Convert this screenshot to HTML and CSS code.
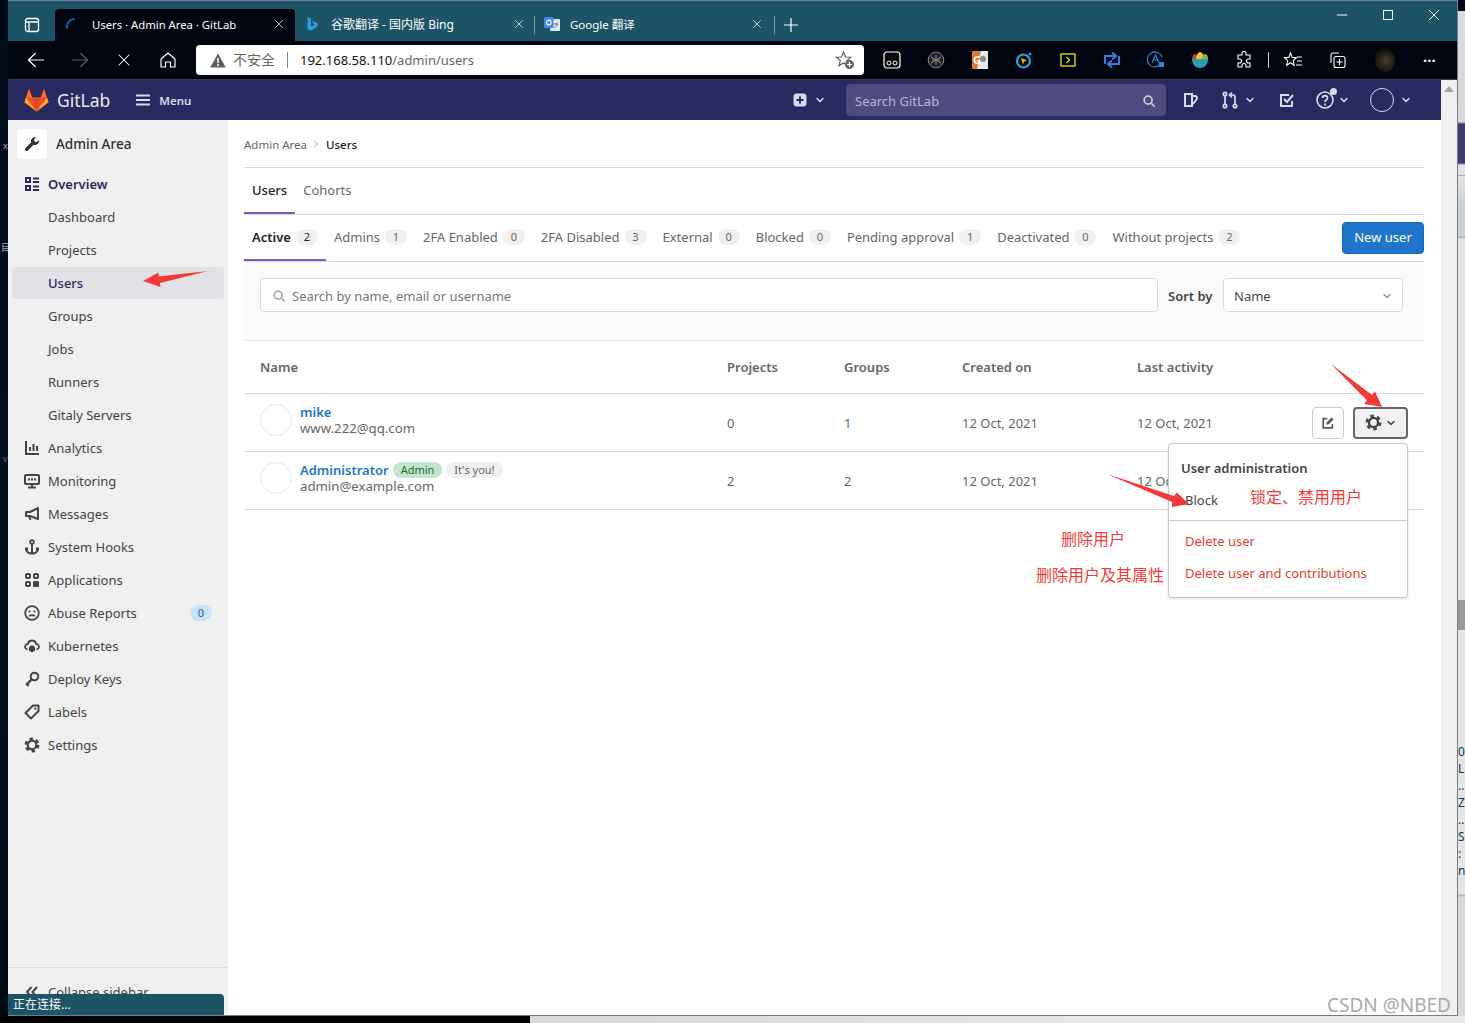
FILE: index.html
```html
<!DOCTYPE html>
<html lang="en">
<head>
  <meta charset="UTF-8" />
  <title>Users · Admin Area · GitLab</title>
  <link rel="stylesheet" href="styles.css">
</head>

<body>

<svg class="sprites" width="0" height="0">
  <symbol id="i-chevron" viewBox="0 0 16 16"><path d="M4 6l4 4 4-4" fill="none" stroke="currentColor" stroke-width="2" stroke-linecap="round" stroke-linejoin="round"/></symbol>
  <symbol id="i-search" viewBox="0 0 16 16"><circle cx="7" cy="7" r="4.5" fill="none" stroke="currentColor" stroke-width="2"/><path d="M10.5 10.5L14 14" stroke="currentColor" stroke-width="2" stroke-linecap="round"/></symbol>
  <symbol id="i-gear" viewBox="0 0 16 16"><circle cx="8" cy="8" r="4.3" fill="none" stroke="currentColor" stroke-width="2.2"/><circle cx="8" cy="8" r="6.3" fill="none" stroke="currentColor" stroke-width="2.4" stroke-dasharray="3.4 3.2"/></symbol>
  <symbol id="i-overview" viewBox="0 0 16 16"><g fill="none" stroke="currentColor" stroke-width="2"><rect x="2" y="2" width="4" height="4"/><rect x="2" y="10" width="4" height="4"/><path d="M9 2.5h6M9 6h6M9 10.500h6M9 14h6"/></g></symbol>
  <symbol id="i-analytics" viewBox="0 0 16 16"><path d="M2 1v13h13M6 11V7M9.500 11V4M13 11V6" fill="none" stroke="currentColor" stroke-width="2"/></symbol>
  <symbol id="i-monitor" viewBox="0 0 16 16"><rect x="1" y="2" width="14" height="9" rx="1" fill="none" stroke="currentColor" stroke-width="2"/><path d="M4 14.500h8M8 11v3M4 6.500h2M7 6.500h2M10 6.500h2" stroke="currentColor" stroke-width="1.800"/></symbol>
  <symbol id="i-messages" viewBox="0 0 16 16"><path d="M14 2v11L6 10H2V6h4zM5 10l1.500 4" fill="none" stroke="currentColor" stroke-width="2" stroke-linejoin="round"/></symbol>
  <symbol id="i-hook" viewBox="0 0 16 16"><circle cx="8" cy="3" r="1.800" fill="none" stroke="currentColor" stroke-width="1.800"/><path d="M8 5v9M2 9v1a6 4.500 0 0 0 12 0V9" fill="none" stroke="currentColor" stroke-width="2"/><path d="M1 10h3M12 10h3" stroke="currentColor" stroke-width="3"/></symbol>
  <symbol id="i-apps" viewBox="0 0 16 16"><g fill="none" stroke="currentColor" stroke-width="2"><rect x="2" y="2" width="4" height="4" rx="1"/><rect x="10" y="2" width="4" height="4" rx="1"/><rect x="2" y="10" width="4" height="4" rx="1"/></g><rect x="9" y="9" width="6" height="6" rx="1.500" fill="currentColor"/></symbol>
  <symbol id="i-abuse" viewBox="0 0 16 16"><circle cx="8" cy="8" r="6.800" fill="none" stroke="currentColor" stroke-width="1.800"/><circle cx="5.500" cy="6.500" r="1.100" fill="currentColor"/><circle cx="10.500" cy="6.500" r="1.100" fill="currentColor"/><path d="M5.200 11.300c1.500-1.600 4.100-1.600 5.600 0" fill="none" stroke="currentColor" stroke-width="1.600"/></symbol>
  <symbol id="i-kube" viewBox="0 0 16 16"><path d="M3.500 11.500C1.500 11 .8 9.500 1.200 8c.4-1.300 1.500-2 2.600-2C4.500 3.800 6 2.500 8 2.500S11.500 3.800 12.200 6c1.100 0 2.200.7 2.600 2 .4 1.500-.3 3-2.300 3.500" fill="none" stroke="currentColor" stroke-width="1.800"/><path d="M8 7l3 2v3.500L8 14.500l-3-2V9z" fill="currentColor"/></symbol>
  <symbol id="i-key" viewBox="0 0 16 16"><circle cx="10.500" cy="5.500" r="3.800" fill="none" stroke="currentColor" stroke-width="2"/><path d="M7.700 8.300L2 14M3 13l1.800 1.800" fill="none" stroke="currentColor" stroke-width="2.400"/></symbol>
  <symbol id="i-label" viewBox="0 0 16 16"><path d="M9 1.500h5.500V7l-7.500 7.500L1.500 9z" fill="none" stroke="currentColor" stroke-width="2" stroke-linejoin="round"/><circle cx="11.300" cy="4.700" r="1.100" fill="currentColor"/></symbol>
  <symbol id="i-wrench" viewBox="0 0 16 16"><path d="M15 4.300l-2.800 2.200-2.600-2.200L12 1.400C9.800.5 7.300 2 7 4.400c-.1.800 0 1.400.2 2L1.500 12c-.8.800-.8 1.800-.1 2.500.7.700 1.700.7 2.500-.1l5.700-5.700c.6.200 1.300.300 2 .2 2.400-.4 4.200-2.300 3.400-4.600z" fill="currentColor"/></symbol>
  <symbol id="i-edit" viewBox="0 0 16 16"><path d="M7 3H2.500v10.500H13V9" fill="none" stroke="currentColor" stroke-width="1.900"/><path d="M6.500 7.300L12 1.800l2.200 2.200-5.500 5.500-2.700.5z" fill="currentColor"/></symbol>
  <symbol id="i-x" viewBox="0 0 16 16"><path d="M2 2l12 12M14 2L2 14" stroke="currentColor" stroke-width="1.200" fill="none"/></symbol>
</svg>

<div class="screen">
  <div class="strip-left">
    <span class="bit bit-x">x</span>
    <span class="bit bit-m">目</span>
    <span class="bit bit-v">v</span>
  </div>

  <div class="window">
    <div class="tabstrip">
      <svg class="tab-toggle" width="16" height="16" viewBox="0 0 16 16"><rect x="1.500" y="1.500" width="13" height="13" rx="2" fill="none" stroke="#fff" stroke-width="1.300"/><path d="M1.500 5h13M5 5v9" stroke="#fff" stroke-width="1.300"/></svg>
      <div class="tab tab-active">
        <svg class="favicon" width="16" height="16" viewBox="0 0 16 16"><path d="M3 12.500A8 8 0 0 1 11 3" fill="none" stroke="#0a5fa6" stroke-width="2"/></svg>
        <span class="tab-title">Users · Admin Area · GitLab</span>
        <svg class="tab-close" width="10" height="10"><use href="#i-x"/></svg>
      </div>
      <div class="tab">
        <svg class="favicon" width="16" height="16" viewBox="0 0 16 16"><path d="M3.500 1l3.500 1.200v8.600l4-2.200-2-1-1-2.700 5.500 2v3.300L7 14.800l-3.500-2z" fill="#2a9fe8"/></svg>
        <span class="tab-title">谷歌翻译 - 国内版 Bing</span>
        <svg class="tab-close" width="10" height="10"><use href="#i-x"/></svg>
      </div>
      <div class="tab-divider"></div>
      <div class="tab tab-last">
        <svg class="favicon" width="16" height="16" viewBox="0 0 16 16"><rect x="6" y="3" width="10" height="12" rx="1" fill="#dfe6f1"/><rect x="0" y="1" width="9.500" height="11" rx="1" fill="#4285f4"/><circle cx="4.800" cy="6.500" r="2.300" fill="none" stroke="#fff" stroke-width="1.200"/><path d="M10 8h4M12 7v1M13.500 8c-.5 2-2 3-3.500 3.500" fill="none" stroke="#666" stroke-width=".900"/></svg>
        <span class="tab-title">Google 翻译</span>
        <svg class="tab-close" width="10" height="10"><use href="#i-x"/></svg>
      </div>
      <div class="tab-divider"></div>
      <svg class="tab-new" width="14" height="14" viewBox="0 0 14 14"><path d="M7 0v14M0 7h14" stroke="#fff" stroke-width="1.200"/></svg>
      <div class="win-controls">
        <svg width="10" height="10" viewBox="0 0 10 10"><path d="M0 5h10" stroke="#fff"/></svg>
        <svg width="10" height="10" viewBox="0 0 10 10"><rect x=".5" y=".5" width="9" height="9" fill="none" stroke="#fff"/></svg>
        <svg width="10" height="10" viewBox="0 0 10 10"><path d="M0 0l10 10M10 0L0 10" stroke="#fff"/></svg>
      </div>
    </div>

    <div class="toolbar">
      <div class="tool-nav">
        <svg width="18" height="18" viewBox="0 0 18 18"><path d="M17 9H1.500M8.500 2L1.500 9l7 7" fill="none" stroke="#fff" stroke-width="1.200"/></svg>
        <svg width="18" height="18" viewBox="0 0 18 18"><path d="M1 9h15.500M9.500 2l7 7-7 7" fill="none" stroke="#5b5b60" stroke-width="1.200"/></svg>
        <svg class="tool-stop" width="14" height="14" viewBox="0 0 16 16"><use href="#i-x" color="#fff"/></svg>
        <svg width="18" height="18" viewBox="0 0 18 18"><path d="M2 8l7-6 7 6v8h-4.500v-5h-5v5H2z" fill="none" stroke="#fff" stroke-width="1.200" stroke-linejoin="round"/></svg>
      </div>
      <div class="address">
        <svg width="16" height="15" viewBox="0 0 16 15"><path d="M8 .5L15.800 14.500H.2z" fill="#606060"/><path d="M8 5v5M8 11v2" stroke="#fff" stroke-width="1.500"/></svg>
        <span class="addr-warn">不安全</span>
        <span class="addr-sep"></span>
        <span class="addr-url">192.168.58.110<span class="addr-path">/admin/users</span></span>
        <svg class="addr-star" width="20" height="20" viewBox="0 0 20 20"><path d="M8.500 2l2 5 5.300.300-4 3.400 1.300 5.100-4.600-2.800-4.500 2.800 1.300-5.100-4-3.400 5.300-.3z" fill="none" stroke="#555" stroke-width="1.100"/><circle cx="14.500" cy="14.500" r="4.500" fill="#666"/><path d="M14.500 12v5M12 14.500h5" stroke="#fff" stroke-width="1.200"/></svg>
      </div>
      <div class="extensions">
        <svg width="18" height="18" viewBox="0 0 18 18"><rect x="1" y="1" width="16" height="16" rx="3" fill="#0a0a0a" stroke="#fff" stroke-width="1.200"/><circle cx="6" cy="12" r="2" fill="none" stroke="#fff"/><circle cx="12" cy="12" r="2" fill="none" stroke="#fff"/></svg>
        <svg width="18" height="18" viewBox="0 0 18 18"><circle cx="9" cy="9" r="7.800" fill="#222" stroke="#888"/><path d="M9 4v10M4 6l10 6M14 6L4 12M5 9h8" stroke="#888"/></svg>
        <svg class="ext-narrow" width="16" height="18" viewBox="0 0 16 18"><rect width="16" height="18" fill="#e9e9e9"/><path d="M0 0h9l-4 18H0z" fill="#e8772e"/><text x="1" y="13" class="ext-g">G</text><circle cx="11" cy="8" r="3" fill="#7c8b96"/></svg>
        <svg width="18" height="18" viewBox="0 0 18 18"><circle cx="8.500" cy="10" r="6.500" fill="#0a0a0a" stroke="#2e9fe0" stroke-width="2.200"/><path d="M6 7l6 2.500-3 1-1 3z" fill="#f2c200"/><circle cx="15" cy="3" r="1.500" fill="#2e9fe0"/></svg>
        <svg class="ext-narrow" width="16" height="16" viewBox="0 0 16 16"><rect x="1" y="2" width="14" height="12" fill="none" stroke="#e2d21a" stroke-width="1.400"/><path d="M6.500 5l3 3-3 3" fill="none" stroke="#e2d21a" stroke-width="1.400"/></svg>
        <svg width="18" height="18" viewBox="0 0 18 18"><path d="M2 13V5h10M9 1.500L13 5 9 8.500M16 5v8H6M9 9.500L5 13l4 3.500" fill="none" stroke="#2e7fe8" stroke-width="2"/></svg>
        <svg width="18" height="18" viewBox="0 0 18 18"><path d="M13 14A7.500 7.500 0 1 1 15 6" fill="none" stroke="#1f8fe0" stroke-width="1.200"/><path d="M5 12l3.500-8L12 12M6.500 9h4" fill="none" stroke="#1f8fe0" stroke-width="1.200"/><rect x="12" y="11" width="5" height="5" fill="#1f8fe0"/></svg>
        <svg width="18" height="18" viewBox="0 0 18 18"><path d="M1 8h16c0 5-3 9-8 9s-8-4-8-9z" fill="#2b9db3"/><path d="M1 8c0-3 2-5 3-5s2 2 3 5z" fill="#c8413c"/><path d="M5 8c0-4 2-7 4-7s4 3 4 7z" fill="#f1c232"/><path d="M11 8c0-3 1-5 3-5s3 2 3 5z" fill="#7fb84a"/></svg>
        <svg width="18" height="18" viewBox="0 0 18 18"><path d="M7 2.500a2 2 0 0 1 4 0V4h4v4h-1.500a2 2 0 0 0 0 4H15v4h-4v-1.500a2 2 0 0 0-4 0V16H3v-4h1.500a2 2 0 0 0 0-4H3V4h4z" fill="none" stroke="#fff" stroke-width="1.100"/></svg>
        <span class="tool-sep"></span>
        <svg width="20" height="18" viewBox="0 0 20 18"><path d="M7.500 2l1.700 4.400 4.300.3-3.300 2.900 1 4.600-3.700-2.500-3.800 2.500 1-4.600L1.500 6.700l4.400-.3zM14 6h5M14 10h5M13 14h6" fill="none" stroke="#fff" stroke-width="1.100"/></svg>
        <svg class="ext-col" width="18" height="18" viewBox="0 0 18 18"><path d="M3 12V4a2 2 0 0 1 2-2h6" fill="none" stroke="#fff" stroke-width="1.100"/><rect x="6" y="5.500" width="11" height="11" rx="2" fill="none" stroke="#fff" stroke-width="1.100"/><path d="M11.500 8v6M8.500 11h6" stroke="#fff" stroke-width="1.100"/></svg>
        <span class="profile"></span>
        <span class="more">···</span>
      </div>
    </div>

    <div class="site">
      <div class="site-main">
        <header class="gl-nav">
          <svg class="gl-logo" width="25" height="24" viewBox="0 0 25 24">
            <path d="M12.500 23.500L.5 14.300 2 9.500l3-9 3.300 9h8.400l3.300-9 3 9 1.500 4.800z" fill="#fc6d26"/>
            <path d="M12.500 23.500L8.300 9.500h8.400z" fill="#e24329"/>
            <path d="M12.500 23.500L2 9.500h6.300zM12.500 23.500L23 9.500h-6.300z" fill="#e8532a"/>
            <path d="M2 9.500L.5 14.300l12 9.200zM23 9.500l1.500 4.800-12 9.200z" fill="#fca326"/>
          </svg>
          <span class="gl-name">GitLab</span>
          <svg class="gl-burger" width="14" height="12" viewBox="0 0 14 12"><path d="M0 1.500h14M0 6h14M0 10.500h14" stroke="#dadaf0" stroke-width="1.800"/></svg>
          <span class="gl-menu">Menu</span>
          <div class="gl-nav-right">
            <svg width="14" height="14" viewBox="0 0 14 14"><rect width="13" height="13" x=".5" y=".5" rx="3" fill="#dadaf0"/><path d="M7 3.500v7M3.500 7h7" stroke="#292961" stroke-width="2"/></svg>
            <svg class="gl-chev" width="12" height="12"><use href="#i-chevron"/></svg>
            <div class="gl-search">
              <span>Search GitLab</span>
              <svg width="14" height="14"><use href="#i-search"/></svg>
            </div>
            <svg class="gl-issues" width="16" height="16" viewBox="0 0 16 16"><path d="M2 2h7v12H2zM10 4h2c2 0 2.500 2 1.500 3.500L10 12" fill="none" stroke="#dadaf0" stroke-width="2"/></svg>
            <svg class="gl-mr" width="16" height="18" viewBox="0 0 16 18"><g fill="none" stroke="#dadaf0" stroke-width="1.700"><circle cx="3" cy="3" r="1.700"/><circle cx="3" cy="15" r="1.700"/><circle cx="13" cy="15" r="1.700"/><path d="M3 5v8M13 13V6c0-1.500-1-2-2-2H8M10 1.500L7.500 4 10 6.500"/></g></svg>
            <svg class="gl-chev" width="12" height="12"><use href="#i-chevron"/></svg>
            <svg class="gl-todo" width="16" height="16" viewBox="0 0 16 16"><path d="M13 9v5H2V3h8M5 7l3 3 6-7" fill="none" stroke="#dadaf0" stroke-width="2"/></svg>
            <span class="gl-help">
              <svg width="18" height="18" viewBox="0 0 18 18"><circle cx="9" cy="9" r="8" fill="none" stroke="#dadaf0" stroke-width="1.600"/><path d="M6.500 7c0-3.300 5-3.300 5 0 0 2-2.500 2-2.500 4M9 12.500v2" fill="none" stroke="#dadaf0" stroke-width="1.700"/></svg>
              <span class="gl-help-dot"></span>
            </span>
            <svg class="gl-chev" width="12" height="12"><use href="#i-chevron"/></svg>
            <span class="gl-avatar"></span>
            <svg class="gl-chev" width="12" height="12"><use href="#i-chevron"/></svg>
          </div>
        </header>

        <div class="page">
          <aside class="sidebar">
            <div class="context">
              <span class="context-icon"><svg width="16" height="16"><use href="#i-wrench"/></svg></span>
              <span>Admin Area</span>
            </div>
            <ul class="side-list">
              <li class="item item-head"><svg width="16" height="16"><use href="#i-overview"/></svg>Overview</li>
              <li class="item sub">Dashboard</li>
              <li class="item sub">Projects</li>
              <li class="item sub active">Users</li>
              <li class="item sub">Groups</li>
              <li class="item sub">Jobs</li>
              <li class="item sub">Runners</li>
              <li class="item sub">Gitaly Servers</li>
              <li class="item"><svg width="16" height="16"><use href="#i-analytics"/></svg>Analytics</li>
              <li class="item"><svg width="16" height="16"><use href="#i-monitor"/></svg>Monitoring</li>
              <li class="item"><svg width="16" height="16"><use href="#i-messages"/></svg>Messages</li>
              <li class="item"><svg width="16" height="16"><use href="#i-hook"/></svg>System Hooks</li>
              <li class="item"><svg width="16" height="16"><use href="#i-apps"/></svg>Applications</li>
              <li class="item"><svg width="16" height="16"><use href="#i-abuse"/></svg>Abuse Reports<span class="side-badge">0</span></li>
              <li class="item"><svg width="16" height="16"><use href="#i-kube"/></svg>Kubernetes</li>
              <li class="item"><svg width="16" height="16"><use href="#i-key"/></svg>Deploy Keys</li>
              <li class="item"><svg width="16" height="16"><use href="#i-label"/></svg>Labels</li>
              <li class="item"><svg width="16" height="16"><use href="#i-gear"/></svg>Settings</li>
            </ul>
            <div class="collapse">
              <svg width="16" height="16" viewBox="0 0 16 16"><path d="M7.500 3L3 8l4.500 5M13 3L8.500 8l4.500 5" fill="none" stroke="currentColor" stroke-width="2"/></svg>
              Collapse sidebar
            </div>
          </aside>

          <main class="content">
            <div class="crumbs">
              <span>Admin Area</span>
              <svg width="8" height="8" viewBox="0 0 16 16"><path d="M5 2l6 6-6 6" fill="none" stroke="#aaa" stroke-width="2"/></svg>
              <span class="crumb-now">Users</span>
            </div>

            <nav class="tabs-top">
              <a class="top-tab on">Users</a>
              <a class="top-tab">Cohorts</a>
            </nav>

            <div class="tabs-filter">
              <a class="f-tab on">Active<b>2</b></a>
              <a class="f-tab">Admins<b>1</b></a>
              <a class="f-tab">2FA Enabled<b>0</b></a>
              <a class="f-tab">2FA Disabled<b>3</b></a>
              <a class="f-tab">External<b>0</b></a>
              <a class="f-tab">Blocked<b>0</b></a>
              <a class="f-tab">Pending approval<b>1</b></a>
              <a class="f-tab">Deactivated<b>0</b></a>
              <a class="f-tab">Without projects<b>2</b></a>
              <button class="btn-new">New user</button>
            </div>

            <div class="filter-bar">
              <div class="filter-input">
                <svg width="14" height="14"><use href="#i-search"/></svg>
                Search by name, email or username
              </div>
              <span class="sort-label">Sort by</span>
              <div class="sort-select">Name<svg width="12" height="12"><use href="#i-chevron"/></svg></div>
            </div>

            <div class="row row-head">
              <span>Name</span><span>Projects</span><span>Groups</span><span>Created on</span><span>Last activity</span>
            </div>

            <div class="row">
              <div class="user">
                <span class="avatar"></span>
                <div class="user-text">
                  <div><a class="user-name">mike</a></div>
                  <div class="user-mail">www.222@qq.com</div>
                </div>
              </div>
              <span>0</span><span>1</span><span>12 Oct, 2021</span><span>12 Oct, 2021</span>
              <div class="row-actions">
                <button class="btn-edit"><svg width="14" height="14"><use href="#i-edit"/></svg></button>
                <button class="btn-gear"><svg width="17" height="17"><use href="#i-gear"/></svg><svg width="12" height="12"><use href="#i-chevron"/></svg></button>
              </div>
            </div>

            <div class="row">
              <div class="user">
                <span class="avatar"></span>
                <div class="user-text">
                  <div><a class="user-name">Administrator</a><span class="pill pill-green">Admin</span><span class="pill">It's you!</span></div>
                  <div class="user-mail">admin@example.com</div>
                </div>
              </div>
              <span>2</span><span>2</span><span>12 Oct, 2021</span><span>12 Oct, 2021</span>
            </div>

            <div class="menu">
              <div class="menu-title">User administration</div>
              <div class="menu-item">Block</div>
              <div class="menu-line"></div>
              <div class="menu-item danger">Delete user</div>
              <div class="menu-item danger">Delete user and contributions</div>
            </div>
          </main>

          <div class="status">正在连接...</div>
        </div>
      </div>

      <div class="scrollbar"><svg width="10" height="6" viewBox="0 0 10 6"><path d="M5 0l5 6H0z" fill="#a3a3a3"/></svg></div>
    </div>
  </div>

  <div class="strip-right">
    <span>0.</span><span>L.</span><span>..</span><span>Z</span><span>..</span><span>S</span><span>:</span><span>n</span>
  </div>
  <div class="strip-bottom"></div>
</div>

<svg class="arrows" width="1465" height="1023">
  <polygon points="143,281 158.500,272.500 158.500,276.500 208,271 160,283 160.500,287" />
  <polygon points="1331,364 1372,395 1375,391.500 1382,407 1364,404 1367,400.500" />
  <polygon points="1107,474 1174,496 1177,492.500 1189,504 1172,507 1172,502" />
</svg>
<div class="note note-block">锁定、禁用用户</div>
<div class="note note-del">删除用户</div>
<div class="note note-delall">删除用户及其属性</div>
<div class="watermark">CSDN @NBED</div>

</body>
</html>
```

FILE: styles.css
```css
:root {
  --chrome-teal: #1c5367;
  --chrome-black: #01050f;
  --nav-bg: #292961;
  --nav-fg: #dadaf0;
  --side-bg: #f0f0f0;
  --line: #dbdbdb;
  --text: #303030;
  --muted: #5e5e5e;
  --blue: #1f75cb;
  --mark: #f33a3a;
}

* {
  box-sizing: border-box;
  margin: 0;
  padding: 0;
}

html, body {
  height: 100%;
  overflow: hidden;
  font-family: "Noto Sans", "Noto Sans CJK SC", sans-serif;
  font-size: 13px;
  color: var(--text);
  background: #000;
}

.sprites {
  position: absolute;
}

.screen {
  display: grid;
  grid-template-columns: 8px 1450px 7px;
  grid-template-rows: 1016px 7px;
  height: 1023px;
}

.strip-left {
  display: flex;
  flex-direction: column;
  overflow: hidden;
  background: linear-gradient(180deg, #010a18, #02101e 60%, #010a14);
  color: #9fb0c0;
  font-size: 9px;
  line-height: 10px;
}

.bit {
  display: block;
  margin-left: 3px;
}

.bit-x {
  margin-top: 141px;
}

.bit-m {
  margin-top: 92px;
  margin-left: 1px;
}

.bit-v {
  margin-top: 201px;
  color: #3f78b0;
}

.strip-right {
  display: flex;
  flex-direction: column;
  overflow: hidden;
  padding-top: 743px;
  background: linear-gradient(180deg, #030712 0, #030712 11px, #dcdcdc 11px, #d8d8d8 122px, #3f3a72 124px, #3f3a72 163px, #e3e3e3 165px, #e3e3e3 175px, #aaa 175px, #aaa 176px, #e3e3e3 176px, #cfd0d4 205px, #cfd0d4 236px, #aaa 237px, #e4e4e4 239px, #e4e4e4 600px, #999 600px, #999 630px, #e4e4e4 630px, #e4e4e4 894px, #aaa 895px, #d8d8d8 897px);
  color: #234;
  font-size: 12px;
  line-height: 17px;
}

.strip-bottom {
  grid-column: 1 / 4;
  background: linear-gradient(90deg, #000 0, #000 530px, #d8d8d8 530px, #e6e6e6 1100px);
}

.window {
  display: flex;
  flex-direction: column;
  border-right: 1px solid #6d7f90;
  border-bottom: 1px solid #6d7f90;
  overflow: hidden;
}

/* browser chrome */
.tabstrip {
  display: flex;
  align-items: flex-end;
  height: 41px;
  flex: none;
  background: var(--chrome-teal);
  border-top: 1px solid #6d7f90;
  color: #fff;
  font-size: 12px;
}

.tab-toggle {
  margin: 0 15px 8px 16px;
}

.tab {
  display: flex;
  align-items: center;
  width: 240px;
  height: 32px;
  padding: 0 11px 2px 9px;
  border-radius: 4px 4px 0 0;
}

.tab-active {
  background: var(--chrome-black);
  font-size: 11.300px;
}

.tab .favicon {
  flex: none;
  margin-right: 11px;
}

.tab-active .favicon {
  margin-right: 12px;
}

.tab-last {
  padding-right: 13px;
  font-size: 11.500px;
}

.tab-last .favicon {
  margin-right: 10px;
}

.tab-title {
  flex: 1;
  white-space: nowrap;
}

.tab-close {
  color: #fff;
  flex: none;
}

.tab-divider {
  width: 1px;
  height: 18px;
  margin: 0 0 7px -1px;
  background: #7a9aa6;
}

.tab-new {
  margin: 0 0 9px 9px;
}

.win-controls {
  display: flex;
  gap: 36px;
  margin: 0 18px 21px auto;
}

.toolbar {
  display: flex;
  align-items: center;
  height: 39px;
  flex: none;
  background: var(--chrome-black);
  border-bottom: 1px solid #3b3b48;
}

.tool-nav {
  display: flex;
  align-items: center;
  gap: 26px;
  width: 188px;
  padding-left: 19px;
}

.tool-stop {
  margin: 0 2px;
}

.address {
  display: flex;
  align-items: center;
  width: 668px;
  height: 30px;
  padding: 0 9px 0 14px;
  background: #fff;
  border-radius: 4px;
  font-size: 13px;
}

.addr-warn {
  margin-left: 7px;
  padding-bottom: 2px;
  color: #666;
  font-size: 14px;
}

.addr-sep {
  width: 1px;
  height: 16px;
  margin: 0 12px;
  background: #888;
}

.addr-url {
  color: #111;
}

.addr-path {
  color: #666;
}

.addr-star {
  margin-left: auto;
}

.extensions {
  display: flex;
  align-items: center;
  gap: 26px;
  padding-left: 19px;
  flex: 1;
}

.ext-narrow {
  margin: 0 1px;
}

.ext-g {
  font-size: 11px;
  font-weight: 700;
  fill: #fff;
}

.tool-sep {
  width: 1px;
  height: 16px;
  margin: 0 -12px 0 -11px;
  background: #ccc;
}

.ext-col {
  margin-left: -1px;
}

.profile {
  width: 20px;
  height: 24px;
  margin-left: 3px;
  border-radius: 50%;
  background: radial-gradient(circle at 55% 55%, #4a3a28, #12100e 70%);
}

.more {
  margin-left: 2px;
  color: #fff;
  font-size: 15px;
  font-weight: 700;
}

/* gitlab top bar */
.site {
  display: flex;
  flex: 1;
  min-height: 0;
}

.site-main {
  display: flex;
  flex-direction: column;
  flex: 1;
  min-width: 0;
}

.scrollbar {
  display: flex;
  justify-content: center;
  flex: none;
  width: 16px;
  padding-top: 6px;
  background: var(--side-bg);
}

.scrollbar svg {
  display: block;
}

.gl-nav {
  display: flex;
  align-items: center;
  height: 40px;
  flex: none;
  padding-left: 16px;
  background: var(--nav-bg);
  color: var(--nav-fg);
}

.gl-name {
  margin-left: 8px;
  color: #fff;
  font-size: 17.500px;
  opacity: .9;
}

.gl-burger {
  margin-left: 26px;
}

.gl-menu {
  margin-left: 9px;
  font-size: 11.500px;
  font-weight: 600;
}

.gl-nav-right {
  display: flex;
  align-items: center;
  margin-left: auto;
  width: 657px;
  height: 100%;
}

.gl-nav-right > svg:first-child {
  margin-left: 9px;
}

.gl-chev {
  flex: none;
  color: var(--nav-fg);
}

.gl-nav-right > .gl-chev:nth-child(2) {
  margin-left: 7px;
}

.gl-search {
  display: flex;
  align-items: center;
  justify-content: space-between;
  width: 320px;
  height: 32px;
  margin-left: 20px;
  padding: 1px 10px 0 9px;
  border-radius: 4px;
  background: #4e4c7e;
  color: #b6b6dc;
}

.gl-search svg {
  color: #c7c7de;
}

.gl-issues {
  margin-left: 17px;
}

.gl-mr {
  margin-left: 23px;
}

.gl-mr + .gl-chev {
  margin-left: 6px;
}

.gl-todo {
  margin-left: 23px;
}

.gl-help {
  position: relative;
  display: flex;
  margin-left: 21px;
}

.gl-help-dot {
  position: absolute;
  top: -3px;
  right: -3px;
  width: 7px;
  height: 7px;
  border-radius: 50%;
  background: #dadaf0;
}

.gl-help + .gl-chev {
  margin-left: 4px;
}

.gl-avatar {
  width: 24px;
  height: 24px;
  margin-left: 20px;
  border: 1px solid #dadaf0;
  border-radius: 50%;
}

.gl-avatar + .gl-chev {
  margin-left: 6px;
}

/* page */
.page {
  display: flex;
  flex: 1;
  min-height: 0;
  position: relative;
}

.sidebar {
  display: flex;
  flex-direction: column;
  flex: none;
  width: 220px;
  padding: 0 4px;
  background: var(--side-bg);
}

.context {
  display: flex;
  align-items: center;
  gap: 9px;
  height: 48px;
  padding: 0 5px;
  font-weight: 500;
  font-size: 13.500px;
}

.context-icon {
  display: flex;
  align-items: center;
  justify-content: center;
  width: 30px;
  height: 30px;
  border-radius: 4px;
  background: #fff;
}

.side-list {
  list-style: none;
}

.item {
  display: flex;
  align-items: center;
  gap: 8px;
  height: 32px;
  margin-bottom: 1px;
  padding-left: 12px;
  border-radius: 4px;
  color: #444;
}

.item-head {
  color: var(--nav-bg);
  font-weight: 600;
}

.sub {
  padding-left: 36px;
}

.active {
  background: #e2e2e6;
  color: #292961;
  font-weight: 500;
}

.side-badge {
  margin: 0 12px 0 auto;
  width: 22px;
  height: 16px;
  border-radius: 8px;
  background: #cbe2f9;
  color: #1f5fb0;
  font-size: 11px;
  line-height: 16px;
  text-align: center;
}

.collapse {
  display: flex;
  align-items: center;
  gap: 8px;
  height: 48px;
  margin: auto -4px 0;
  padding-left: 16px;
  border-top: 1px solid #dcdcdc;
  color: #444;
}

.content {
  position: relative;
  flex: 1;
  min-width: 0;
  padding: 0 17px 0 16px;
  background: #fff;
}

.crumbs {
  display: flex;
  align-items: center;
  gap: 5px;
  height: 48px;
  padding-top: 1px;
  border-bottom: 1px solid var(--line);
  color: #666;
  font-size: 11.500px;
}

.crumb-now {
  margin-left: 1px;
  color: #222;
  font-weight: 500;
}

.tabs-top {
  display: flex;
  height: 47px;
  border-bottom: 1px solid var(--line);
}

.top-tab {
  padding: 13px 8px 0;
  color: #666;
}

.top-tab.on,
.f-tab.on {
  color: #222;
  font-weight: 600;
  box-shadow: inset 0 -2px 0 #6666c4;
}

.top-tab.on {
  font-weight: 500;
}

.tabs-filter {
  display: flex;
  align-items: center;
  height: 47px;
  border-bottom: 1px solid var(--line);
}

.f-tab {
  display: flex;
  align-items: center;
  height: 100%;
  padding: 0 8px 2px;
  color: #666;
  white-space: nowrap;
}

.f-tab b {
  width: 22px;
  height: 16px;
  margin-left: 5px;
  border-radius: 8px;
  background: #f0f0f0;
  font-size: 11px;
  font-weight: 400;
  line-height: 16px;
  text-align: center;
}

.btn-new {
  margin-left: auto;
  width: 82px;
  height: 32px;
  padding-bottom: 2px;
  border: 1px solid #1068bf;
  border-radius: 4px;
  background: var(--blue);
  color: #fff;
  font: inherit;
}

.filter-bar {
  display: flex;
  gap: 10px;
  height: 79px;
  padding: 16px 21px 0 16px;
  background: #fafafa;
  border-bottom: 1px solid #e5e5e5;
}

.filter-input {
  display: flex;
  align-items: center;
  gap: 6px;
  flex: 1;
  height: 34px;
  padding: 2px 11px 0;
  border: 1px solid var(--line);
  border-radius: 4px;
  background: #fff;
  color: #777;
}

.filter-input svg {
  color: #aaa;
}

.sort-label {
  flex: none;
  width: 46px;
  height: 34px;
  color: #444;
  font-weight: 600;
  line-height: 36px;
  white-space: nowrap;
}

.sort-select {
  display: flex;
  align-items: center;
  justify-content: space-between;
  flex: none;
  width: 180px;
  height: 34px;
  margin-left: -1px;
  padding: 2px 9px 0 10px;
  border: 1px solid var(--line);
  border-radius: 4px;
  background: #fff;
  color: #444;
}

.sort-select svg {
  color: #999;
}

.row {
  display: grid;
  grid-template-columns: 467px 117px 118px 175px 1fr 112px;
  align-items: center;
  height: 58px;
  padding-left: 16px;
  border-bottom: 1px solid var(--line);
  color: #666;
}

.row-head {
  height: 53px;
  font-weight: 600;
}

.user {
  display: flex;
  align-items: center;
  gap: 8px;
  padding-bottom: 6px;
}

.avatar {
  width: 32px;
  height: 32px;
  border: 1px solid #e8e8e8;
  border-radius: 50%;
  flex: none;
}

.user-text {
  line-height: 16px;
}

.user-mail {
  font-size: 13.200px;
}

.user-name {
  color: var(--blue);
  font-weight: 600;
}

.pill {
  display: inline-block;
  vertical-align: top;
  height: 16px;
  margin-left: 4px;
  padding: 0 8px;
  border-radius: 8px;
  background: #f0f0f0;
  color: #666;
  font-size: 11px;
  line-height: 16px;
}

.pill-green {
  background: #c3e6cd;
  color: #24663b;
}

.row-actions {
  display: flex;
  justify-content: flex-end;
  gap: 9px;
  padding-right: 16px;
}

.row-actions button {
  display: flex;
  align-items: center;
  justify-content: center;
  height: 32px;
  border-radius: 4px;
}

.btn-edit {
  flex: none;
  width: 32px;
  border: 1px solid #ccc;
  background: #fff;
  color: #555;
}

.btn-gear {
  flex: none;
  gap: 3px;
  width: 55px;
  border: 2px solid #666;
  background: #f0f0f0;
  color: #444;
}

.menu {
  position: absolute;
  top: 323px;
  left: 940px;
  width: 240px;
  height: 155px;
  padding-top: 12px;
  border: 1px solid #c8c8c8;
  border-radius: 4px;
  background: #fff;
  box-shadow: 0 1px 3px rgba(0, 0, 0, .12);
}

.menu-title {
  height: 29px;
  padding: 3px 12px 0;
  color: #444;
  font-weight: 600;
}

.menu-item {
  height: 32px;
  padding: 6px 16px;
  color: #444;
}

.menu-line {
  height: 1px;
  margin: 3px 0 5px;
  background: #c8c8c8;
}

.menu-item.danger {
  color: #e0412a;
}

.status {
  position: absolute;
  left: 0;
  bottom: 0;
  width: 216px;
  height: 21px;
  padding-left: 5px;
  border-radius: 0 4px 0 0;
  background: var(--chrome-teal);
  color: #fff;
  font-size: 12px;
  line-height: 21px;
}

/* hand-drawn marks over the screenshot */
.arrows {
  position: absolute;
  top: 0;
  left: 0;
  fill: var(--mark);
}

.note {
  position: absolute;
  color: var(--mark);
  font-family: "Noto Sans CJK SC", sans-serif;
  font-size: 16px;
  line-height: 20px;
  white-space: nowrap;
}

.note-block {
  top: 486px;
  left: 1250px;
}

.note-del {
  top: 528px;
  left: 1061px;
}

.note-delall {
  top: 564px;
  left: 1036px;
}

.watermark {
  position: absolute;
  top: 992px;
  left: 1327px;
  color: #aaa;
  font-size: 19px;
  line-height: 26px;
  white-space: nowrap;
}
```
